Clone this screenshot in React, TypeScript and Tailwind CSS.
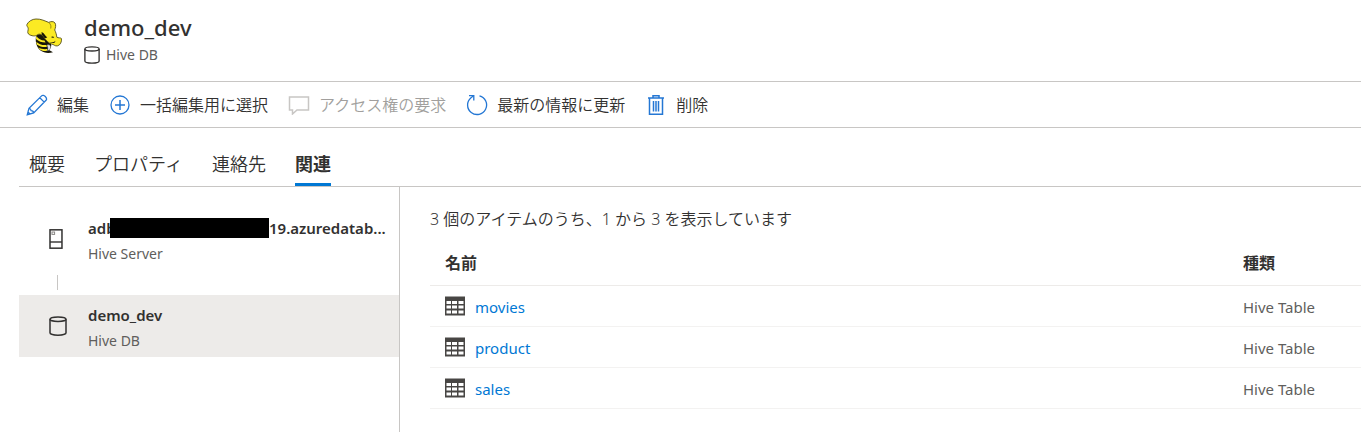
import type { ReactNode } from "react";

function CylinderIcon({ className }: { className?: string }) {
  return (
    <svg viewBox="0 0 18 20" fill="none" stroke="#323130" strokeWidth="1.5" className={className} aria-hidden="true">
      <ellipse cx="9" cy="3.2" rx="8" ry="2.3" />
      <path d="M1 3.2V16.8C1 18.1 4.6 19.2 9 19.2S17 18.1 17 16.8V3.2" />
    </svg>
  );
}

function ServerIcon() {
  return (
    <svg viewBox="0 0 14 20" fill="none" stroke="#323130" className="h-5 w-3.5" aria-hidden="true">
      <rect x="1" y="0.8" width="12" height="18.4" strokeWidth="1.5" />
      <path d="M1 13H13" strokeWidth="1.4" />
      <rect x="3" y="3" width="2.6" height="2.4" stroke="#8a8886" strokeWidth="1" />
    </svg>
  );
}

function HiveLogo() {
  return (
    <svg viewBox="0 0 36 36" className="h-9 w-9" aria-hidden="true">
      <path d="M10.500 16.500C8.800 22 10 29 14.500 32.500C18 35 22 35.500 27 34.300L23 32C26 29.500 26 25 23 21L14 15Z" fill="#191708" />
      <path d="M10.300 18C12.500 21 15 22.300 18.500 22.500L19.500 24.600C16 24.600 12.500 23.300 10 21ZM10.300 23.700C13 26.300 16.500 27.500 20.500 27L20.800 29C17 29.400 13.500 28.500 10.800 26.500ZM12.300 29.200C15 31 18 31.400 21.300 31L20.700 32.900C18.500 33.200 16 32.800 14 31.700Z" fill="#fbea23" />
      <path d="M21 27C24 26.300 25.500 28 23.700 31.500L21.400 33L22 30Z" fill="#e5e5e5" stroke="#77776f" strokeWidth="0.4" />
      <path d="M1 6.300C2.400 3.500 6.200 1 10 1C15 .8 19.200 3.100 22.700 4.400C24.700 3.400 27.500 3 29 5C30.300 7.200 29.400 10 28.700 12C29.700 14.100 30.500 16.200 30.800 19.200C32.300 20.200 34.600 19.500 35.400 20.500C36 23.500 34.400 27.300 31.300 27.900C29 28.300 27.900 26.500 25.600 26C22.300 25.200 19.600 21.800 17.700 19C16.300 16.800 13.800 15.300 11.600 16.700C9.400 18.700 5.200 18 2.700 16.200C.700 14.500 2.600 12.200 2.200 10.200C2 8.800 .200 8 1 6.300Z" fill="#fbea23" stroke="#55501e" strokeWidth="0.9" />
      <path d="M15.500 14C18.500 15 18.900 17.600 21.300 19.400L18.800 20.200L15.800 16.500ZM25 19C26 18.100 27.600 18.300 28.200 19.200C27.300 20 26 20 25 19ZM23.500 23.800C25.500 25 28 24.300 29.500 22.700L28.800 24.600C26.700 25.500 24.700 25.200 23.500 23.800Z" fill="#191708" />
      <path d="M22.700 4.400C24.900 6.300 25.300 8.500 24.700 10.500" fill="none" stroke="#6b6212" strokeWidth="0.7" />
    </svg>
  );
}

function EditIcon() {
  return (
    <svg viewBox="0 0 22 22" fill="none" stroke="#2477d4" strokeWidth="1.3" className="h-[22px] w-[22px]" aria-hidden="true">
      <path d="M1.300 20.700L3 14.300L15.600 1.900C17.600-.100 21.900 4.200 20 6.300L7.700 18.900ZM13.800 3.700L18.200 8.100M3 14.300C4.900 14.500 5 15 5.100 16.700C6.900 16.700 7.500 17.200 7.700 18.900M1.300 20.700L2 18L4 20Z" />
    </svg>
  );
}

function AddIcon() {
  return (
    <svg viewBox="0 0 20 20" fill="none" stroke="#2477d4" strokeWidth="1.3" className="h-5 w-5" aria-hidden="true">
      <circle cx="10" cy="10" r="9" />
      <path d="M5 10H15M10 5V15" strokeWidth="1.5" />
    </svg>
  );
}

function CommentIcon() {
  return (
    <svg viewBox="0 0 22 20" fill="none" stroke="#c8c6c4" strokeWidth="1.5" className="h-5 w-[22px]" aria-hidden="true">
      <path d="M1.500 2H20.500V15H9L4.500 19V15H1.500Z" />
    </svg>
  );
}

function RefreshIcon() {
  return (
    <svg viewBox="0 0 22 22" fill="none" stroke="#2477d4" strokeWidth="1.3" className="h-[22px] w-[22px]" aria-hidden="true">
      <path d="M13.500 1.800A9.500 9.500 0 1 1 5 3.700L7.500 1.800" />
      <path d="M3 1.700H7.800V6.500" />
    </svg>
  );
}

function DeleteIcon() {
  return (
    <svg viewBox="0 0 18 22" fill="none" stroke="#2477d4" strokeWidth="1.5" className="h-[22px] w-[18px]" aria-hidden="true">
      <path d="M1 4H17M6 4V1.700H12V4M2.500 4V20.300H15.500V4M6.500 7V17.500M9 7V17.500M11.500 7V17.500" />
    </svg>
  );
}

function TableIcon() {
  return (
    <svg viewBox="0 0 20 20" className="h-5 w-5 shrink-0" aria-hidden="true">
      <path d="M0 .500H20V19.500H0Z" fill="#484644" />
      <path d="M1.500 5H6V8H1.500ZM7 5H12V8H7ZM13.500 5H18.500V8H13.500ZM1.500 9.500H6V12.500H1.500ZM7 9.500H12V12.500H7ZM13.500 9.500H18.500V12.500H13.500ZM1.500 14.500H6V17.500H1.500ZM7 14.500H12V17.500H7ZM13.500 14.500H18.500V17.500H13.500Z" fill="#fff" />
    </svg>
  );
}

function Command({ icon, label, disabled }: { icon: ReactNode; label: string; disabled?: boolean }) {
  return (
    <button type="button" disabled={disabled} className="flex items-center gap-[9px] whitespace-nowrap disabled:text-[#a19f9d]">
      <span className="flex w-[22px] justify-center">{icon}</span>
      {label}
    </button>
  );
}

const tabs = ["概要", "プロパティ", "連絡先", "関連"];
const tables = ["movies", "product", "sales"];

export default function App() {
  return (
    <div className="flex min-h-screen flex-col bg-white font-['Noto_Sans','Noto_Sans_CJK_JP',sans-serif] text-base font-[350] text-[#323130]">
      <header className="flex gap-5 border-b border-[#c8c6c4] px-[26px] pt-2.5 pb-4">
        <div className="pt-2">
          <HiveLogo />
        </div>
        <div className="pl-0.5">
          <h1 className="text-[22px] leading-[34px] font-medium">demo_dev</h1>
          <p className="flex items-center gap-1.5 text-sm leading-[21px] font-normal text-[#605e5c]">
            <CylinderIcon className="h-[18px] w-4" />
            Hive DB
          </p>
        </div>
      </header>

      <div role="toolbar" className="flex h-[46px] items-center gap-5 border-b border-[#c8c6c4] px-[26px]">
        <Command icon={<EditIcon />} label="編集" />
        <Command icon={<AddIcon />} label="一括編集用に選択" />
        <Command icon={<CommentIcon />} label="アクセス権の要求" disabled />
        <Command icon={<RefreshIcon />} label="最新の情報に更新" />
        <Command icon={<DeleteIcon />} label="削除" />
      </div>

      <div className="flex grow flex-col pt-4 pl-[19px]">
        <div role="tablist" className="flex gap-[29px] border-b border-[#c8c6c4] pl-2.5 text-lg">
          {tabs.map((tab) => (
            <button
              key={tab}
              type="button"
              role="tab"
              aria-selected={tab === "関連"}
              className="h-[42px] border-b-3 border-transparent aria-selected:border-[#0078d4] aria-selected:font-bold"
            >
              {tab}
            </button>
          ))}
        </div>

        <div className="flex grow">
          <nav className="w-[381px] shrink-0 border-r border-[#c8c6c4] pt-[21px]">
            <a href="#server" className="flex h-[62px] items-center pr-3.5 pl-[30px]">
              <ServerIcon />
              <span className="ml-[25px] min-w-0 grow pt-1">
                <span className="flex items-center text-[15px] leading-5 font-semibold">
                  <span className="w-[22px]">adb</span>
                  <span className="relative h-5 w-[159px] shrink-0 bg-black" />
                  <span className="whitespace-nowrap">19.azuredatab...</span>
                </span>
                <span className="mt-1.5 block text-sm leading-5 font-normal text-[#605e5c]">Hive Server</span>
              </span>
            </a>
            <div className="ml-[38px] flex h-[25px] items-center">
              <div className="h-[15px] w-px bg-[#c8c6c4]" />
            </div>
            <a href="#database" aria-current="page" className="flex h-[62px] items-center bg-[#edebe9] pr-3.5 pl-[30px]">
              <CylinderIcon className="h-5 w-[18px]" />
              <span className="ml-[21px] pt-1">
                <span className="block text-[15px] leading-5 font-semibold">demo_dev</span>
                <span className="mt-1.5 block text-sm leading-5 font-normal text-[#605e5c]">Hive DB</span>
              </span>
            </a>
          </nav>

          <main className="grow pt-5 pl-[30px]">
            <p className="leading-6">3 個のアイテムのうち、1 から 3 を表示しています</p>
            <table className="mt-2.5 w-full table-fixed text-left">
              <thead>
                <tr className="h-11 border-b border-[#edebe9]">
                  <th className="px-[15px] font-bold">名前</th>
                  <th className="w-[133px] px-[15px] font-bold">種類</th>
                </tr>
              </thead>
              <tbody>
                {tables.map((name) => (
                  <tr key={name} className="h-[41px] border-b border-[#f3f2f1] text-[15px] font-normal">
                    <td className="px-[15px]">
                      <a href={`#${name}`} className="flex items-center gap-2.5 text-[#0078d4]">
                        <TableIcon />
                        <span className="pt-1">{name}</span>
                      </a>
                    </td>
                    <td className="px-[15px] pt-1 whitespace-nowrap text-[#605e5c]">Hive Table</td>
                  </tr>
                ))}
              </tbody>
            </table>
          </main>
        </div>
      </div>
    </div>
  );
}
